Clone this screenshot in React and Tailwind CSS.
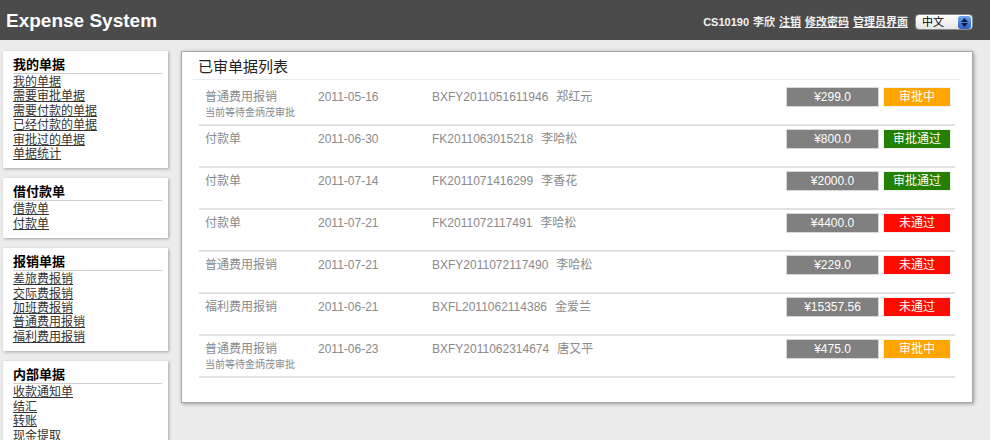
import React from "react";

// ---------- DATA ----------
const MENUS = [
  {
    title: "我的单据",
    links: ["我的单据", "需要审批单据", "需要付款的单据", "已经付款的单据", "审批过的单据", "单据统计"],
  },
  { title: "借付款单", links: ["借款单", "付款单"] },
  { title: "报销单据", links: ["差旅费报销", "交际费报销", "加班费报销", "普通费用报销", "福利费用报销"] },
  { title: "内部单据", links: ["收款通知单", "结汇", "转账", "现金提取", "其他单据"] },
];

const ROWS = [
  { type: "普通费用报销", date: "2011-05-16", no: "BXFY2011051611946", name: "郑红元", amount: "¥299.0", status: "审批中", note: "当前等待金炳茂审批" },
  { type: "付款单", date: "2011-06-30", no: "FK2011063015218", name: "李哈松", amount: "¥800.0", status: "审批通过" },
  { type: "付款单", date: "2011-07-14", no: "FK2011071416299", name: "李香花", amount: "¥2000.0", status: "审批通过" },
  { type: "付款单", date: "2011-07-21", no: "FK2011072117491", name: "李哈松", amount: "¥4400.0", status: "未通过" },
  { type: "普通费用报销", date: "2011-07-21", no: "BXFY2011072117490", name: "李哈松", amount: "¥229.0", status: "未通过" },
  { type: "福利费用报销", date: "2011-06-21", no: "BXFL2011062114386", name: "金爱兰", amount: "¥15357.56", status: "未通过" },
  { type: "普通费用报销", date: "2011-06-23", no: "BXFY2011062314674", name: "唐又平", amount: "¥475.0", status: "审批中", note: "当前等待金炳茂审批" },
];

const STATUS_COLORS = {
  审批中: "bg-[#ffa500]",
  审批通过: "bg-[#238000]",
  未通过: "bg-[#ff0a00]",
};

// ---------- UI COMPONENTS ----------
function LangSelect() {
  return (
    <div className="ml-[3px] flex h-[16px] w-[58px] items-center rounded-[4px] border border-[#8a8a8a] bg-gradient-to-b from-white to-[#e6e6e6]">
      <span className="flex-1 pl-[6px] text-[11px] font-normal leading-none text-black">中文</span>
      <span className="mr-[1px] flex h-[13px] w-[13px] flex-col items-center justify-center gap-[1px] rounded-[3px] bg-gradient-to-b from-[#6fa3f0] to-[#2a62c9]">
        <svg width="7" height="4" viewBox="0 0 7 4"><path d="M0 4 L3.5 0 L7 4 Z" fill="#0b1a3a" /></svg>
        <svg width="7" height="4" viewBox="0 0 7 4"><path d="M0 0 L3.5 4 L7 0 Z" fill="#0b1a3a" /></svg>
      </span>
    </div>
  );
}

function MenuBox({ title, links }) {
  return (
    <div className="bg-white pl-[10px] pr-[6px] pt-[6px] pb-[7px] shadow-[1px_1px_3px_rgba(0,0,0,0.3)]">
      <h3 className="border-b border-[#cfcfcf] pb-[1px] text-[13px] font-bold leading-[15px] text-black">{title}</h3>
      <ul className="pt-[1px]">
        {links.map((l) => (
          <li key={l} className="text-[12px] leading-[14.4px]">
            <a href="#" className="text-[#333] underline">{l}</a>
          </li>
        ))}
      </ul>
    </div>
  );
}

function BillRow({ row }) {
  return (
    <div className="flex h-[42px] border-b-2 border-[#e2e2e2] pl-[6px] pr-[4px] pt-[3px] text-[#8a8a8a]">
      <div className="flex-1">
        <div className="flex h-[20px] items-center text-[12px]">
          <span className="w-[113px]">{row.type}</span>
          <span className="w-[114px]">{row.date}</span>
          <span>{row.no}</span>
          <span className="ml-[8px]">{row.name}</span>
        </div>
        {row.note && <div className="text-[10px] leading-[12px]">{row.note}</div>}
      </div>
      <div className="flex h-[20px] w-[93px] items-center justify-center border border-[#d8d8d8] bg-[#808080] text-[12px] text-white">
        {row.amount}
      </div>
      <div className={`ml-[4px] flex h-[20px] w-[68px] items-center justify-center border border-[#f2f2f2] text-[12px] text-white ${STATUS_COLORS[row.status]}`}>
        {row.status}
      </div>
    </div>
  );
}

// ---------- MAIN COMPONENT ----------
export default function App() {
  return (
    <div className="min-h-screen bg-[#ececec] font-['Liberation_Sans','Noto_Sans_CJK_SC',sans-serif]">
      {/* Header */}
      <div className="flex h-[40px] items-center justify-between bg-[#4b4b4b] pl-[6px] pr-[17px]">
        <h1 className="text-[19px] font-bold leading-none text-white">Expense System</h1>
        <div className="flex items-center gap-[4px] pt-[4px] text-[11px] font-bold text-[#f2f2f2]">
          <span>CS10190</span>
          <span>李欣</span>
          <a href="#" className="underline">注销</a>
          <a href="#" className="underline">修改密码</a>
          <a href="#" className="underline">管理员界面</a>
          <LangSelect />
        </div>
      </div>

      <div className="flex items-start pl-[3px] pr-[17px] pt-[11px]">
        {/* Sidebar */}
        <div className="flex w-[165px] flex-col gap-[10px]">
          {MENUS.map((m) => (
            <MenuBox key={m.title} title={m.title} links={m.links} />
          ))}
        </div>

        {/* Main panel */}
        <div className="ml-[13px] w-[792px] border border-[#a8a8a8] bg-white pl-[11px] pr-[12px] pt-[6px] pb-[24px] shadow-[1px_1px_4px_rgba(0,0,0,0.35)]">
          <h2 className="border-b border-[#e3eded] pb-[3px] pl-[5px] text-[15px] leading-[18px] text-[#222]">已审单据列表</h2>
          <div className="ml-[6px] mr-[5px] mt-[4px]">
            {ROWS.map((r) => (
              <BillRow key={r.no} row={r} />
            ))}
          </div>
        </div>
      </div>
    </div>
  );
}
